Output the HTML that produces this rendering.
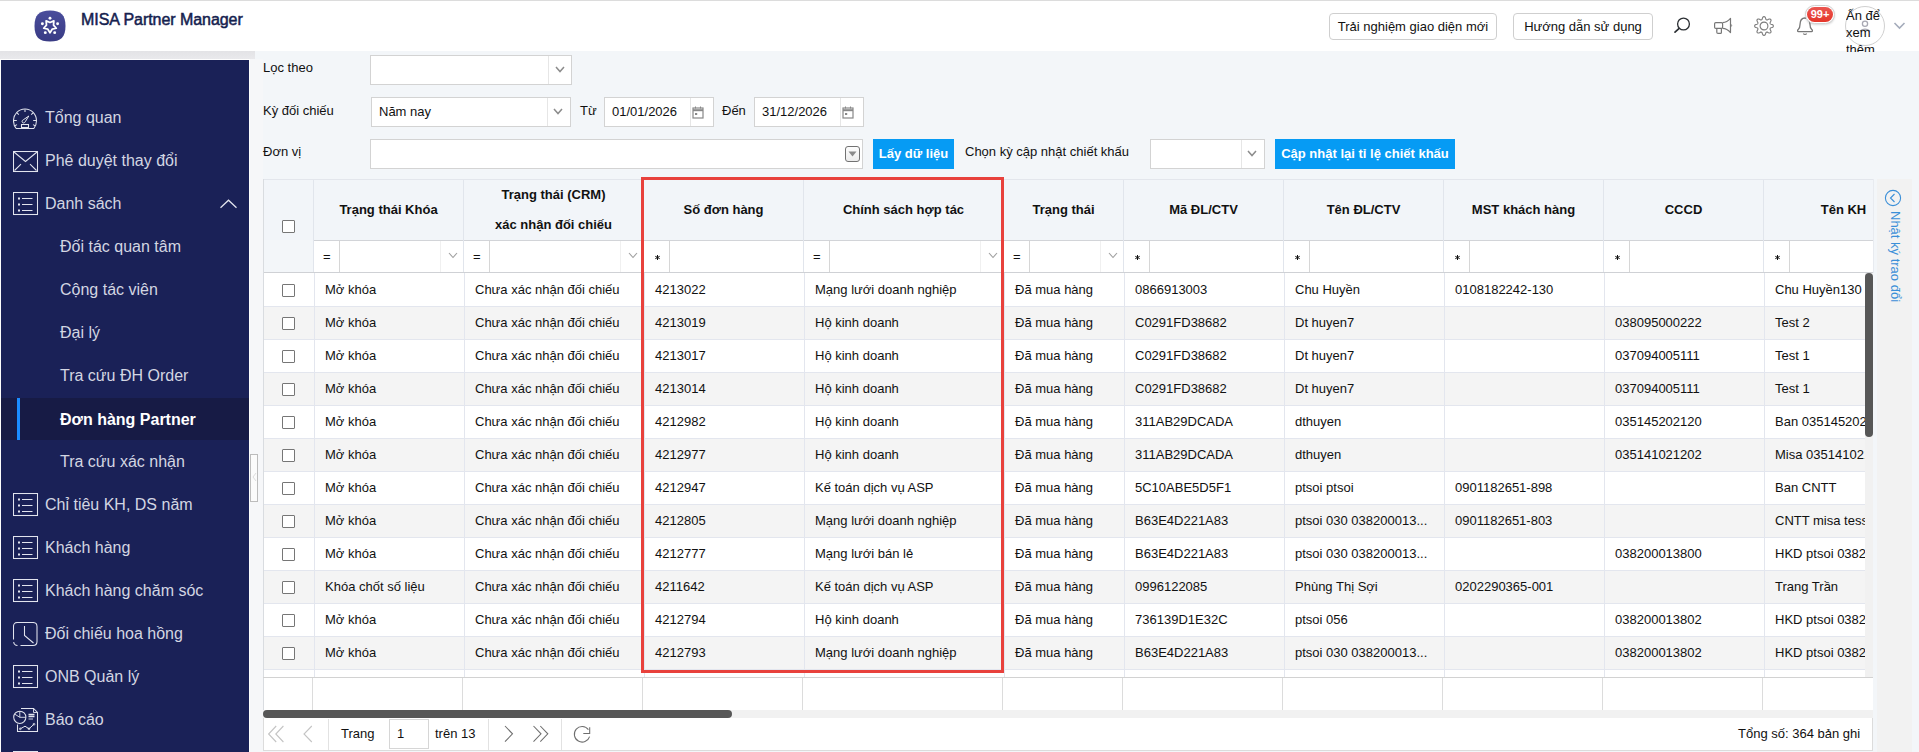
<!DOCTYPE html><html><head><meta charset="utf-8"><style>
*{box-sizing:border-box;margin:0;padding:0}
html,body{width:1919px;height:752px;overflow:hidden}
body{position:relative;background:#f3f6f9;font-family:"Liberation Sans",sans-serif;font-size:13px;color:#111}
.a{position:absolute}
#topline{left:0;top:0;width:1919px;height:1px;background:#dcdcdc}
#header{left:0;top:1px;width:1919px;height:50px;background:#fff}
#title{left:81px;top:10px;font-size:16px;font-weight:400;color:#15214f;letter-spacing:-0.05px;-webkit-text-stroke:0.5px #15214f;white-space:nowrap;line-height:18px}
.hbtn{top:12px;height:27px;border:1px solid #cfcfcf;border-radius:4px;background:#fff;font-size:13px;line-height:25px;text-align:center;color:#111;white-space:nowrap}
#sbgray{left:0;top:51px;width:255px;height:8px;background:linear-gradient(#e3e3e6,#e9e9ec)}
#sidebar{left:1px;top:60px;width:248px;height:692px;background:#1a2157;overflow:hidden}
.si{position:absolute;left:0;width:248px;height:43px;color:#d3d6e2;font-size:16px;line-height:43px;white-space:nowrap}
.si svg{position:absolute;left:12px}
.si .tx{position:absolute;left:44px;top:1px}
.si.sub .tx{left:59px}
.si.active{background:#171b45;color:#fff;font-weight:700}
.si.active:before{content:"";position:absolute;left:16px;top:0;width:3px;height:42px;background:#1a8cff}
#handle{left:250px;top:454px;width:8px;height:48px;border:1px solid #bcbcbc;background:#fbfbfb}
.lbl{white-space:nowrap;line-height:15px;color:#111}
.inp{background:#fff;border:1px solid #d3d3d3;height:30px}
.inp .dv{position:absolute;top:0;bottom:0;width:1px;background:#e6e6e6}
.chev{position:absolute}
.btnb{background:#069bf4;color:#fff;font-weight:700;text-align:center;line-height:30px;height:30px;white-space:nowrap}
/* table */
#tbl{left:263px;top:179px;width:1610px;height:498px;overflow:hidden;background:#fff;border:1px solid #dde1e8;border-right:none}
.hd{position:absolute;top:0;height:60px;background:#f2f5f9;border-right:1px solid #e1e5ec;font-weight:700;text-align:center;white-space:nowrap}
.fr{position:absolute;top:60px;height:33px;background:#fff;border-right:1px solid #e1e5ec;border-top:1px solid #d4d6da;border-bottom:1px solid #d4d6da}
.op{position:absolute;left:0;top:0;width:26px;height:31px;border-right:1px solid #e3e3e3;line-height:31px;padding-left:10px}
.row{position:absolute;left:0;height:33px;width:1700px}
.row.odd{background:#fff}
.row.even{background:#f4f4f4}
.cell{position:absolute;top:0;height:33px;border-right:1px solid #e1e5ec;border-bottom:1px solid #e3e6ee;line-height:32px;padding-left:10px;white-space:nowrap;overflow:hidden}
.cb{position:absolute;width:13px;height:13px;border:1px solid #767676;background:#fff;border-radius:1px}
</style></head><body><div id="topline" class="a"></div><div id="header" class="a"><svg class="a" style="left:34px;top:9px" width="32" height="32" viewBox="0 0 32 32">
<defs><linearGradient id="lg" x1="0" y1="0" x2="0" y2="1"><stop offset="0" stop-color="#4a4d9c"/><stop offset="1" stop-color="#393b84"/></linearGradient></defs>
<path d="M16 0.5 C27 0.5 31.5 5 31.5 16 C31.5 27 27 31.5 16 31.5 C5 31.5 0.5 27 0.5 16 C0.5 5 5 0.5 16 0.5 Z" fill="url(#lg)"/>
<g fill="#fff"><circle cx="16.00" cy="8.20" r="1.45"/><circle cx="8.39" cy="13.73" r="1.45"/><circle cx="23.61" cy="13.73" r="1.45"/><circle cx="11.30" cy="22.67" r="1.45"/><circle cx="20.70" cy="22.67" r="1.45"/></g>
<path d="M16.00 22.80 L13.83 19.19 L9.72 18.24 L12.48 15.06 L12.12 10.86 L16.00 12.50 L19.88 10.86 L19.52 15.06 L22.28 18.24 L18.17 19.19 Z" fill="none" stroke="#fff" stroke-width="1.75" stroke-linejoin="round"/>
</svg><div id="title" class="a">MISA Partner Manager</div><div class="a hbtn" style="left:1329px;width:168px">Trải nghiệm giao diện mới</div><div class="a hbtn" style="left:1513px;width:140px">Hướng dẫn sử dụng</div><svg class="a" style="left:1672px;top:15px" width="20" height="20" viewBox="0 0 20 20"><circle cx="11.5" cy="8" r="5.9" fill="none" stroke="#2b2f33" stroke-width="1.3"/><path d="M6.9 12.6 L3 16.1" stroke="#2b2f33" stroke-width="1.7" stroke-linecap="round"/></svg><svg class="a" style="left:1712px;top:15px" width="22" height="20" viewBox="0 0 22 20"><rect x="2.6" y="6.6" width="8" height="5.8" rx="1.2" fill="none" stroke="#777" stroke-width="1.2"/><path d="M10.6 6.6 Q15 6.4 18.5 2.4 V16.6 Q15 12.6 10.6 12.4" fill="none" stroke="#777" stroke-width="1.2" stroke-linejoin="round"/><path d="M4.8 12.4 V16.2 Q4.8 17.4 6 17.4 H8.4 Q9.4 17.4 9.4 16.4 V12.4" fill="none" stroke="#777" stroke-width="1.2"/><path d="M19.1 8.4 Q20.2 9.5 19.1 10.6" fill="none" stroke="#777" stroke-width="1"/></svg><svg class="a" style="left:1753.5px;top:15.4px" width="20" height="20" viewBox="0 0 20 20"><path d="M19.35 10.00 L19.22 10.60 L18.81 11.16 L17.85 11.56 L16.87 11.84 L16.40 12.17 L16.14 12.54 L16.06 12.99 L16.16 13.55 L16.65 14.44 L17.05 15.41 L16.95 16.09 L16.61 16.61 L16.09 16.95 L15.41 17.05 L14.44 16.65 L13.55 16.16 L12.99 16.06 L12.54 16.14 L12.17 16.40 L11.84 16.87 L11.56 17.85 L11.16 18.81 L10.60 19.22 L10.00 19.35 L9.40 19.22 L8.84 18.81 L8.44 17.85 L8.16 16.87 L7.83 16.40 L7.46 16.14 L7.01 16.06 L6.45 16.16 L5.56 16.65 L4.59 17.05 L3.91 16.95 L3.39 16.61 L3.05 16.09 L2.95 15.41 L3.35 14.44 L3.84 13.55 L3.94 12.99 L3.86 12.54 L3.60 12.17 L3.13 11.84 L2.15 11.56 L1.19 11.16 L0.78 10.60 L0.65 10.00 L0.78 9.40 L1.19 8.84 L2.15 8.44 L3.13 8.16 L3.60 7.83 L3.86 7.46 L3.94 7.01 L3.84 6.45 L3.35 5.56 L2.95 4.59 L3.05 3.91 L3.39 3.39 L3.91 3.05 L4.59 2.95 L5.56 3.35 L6.45 3.84 L7.01 3.94 L7.46 3.86 L7.83 3.60 L8.16 3.13 L8.44 2.15 L8.84 1.19 L9.40 0.78 L10.00 0.65 L10.60 0.78 L11.16 1.19 L11.56 2.15 L11.84 3.13 L12.17 3.60 L12.54 3.86 L12.99 3.94 L13.55 3.84 L14.44 3.35 L15.41 2.95 L16.09 3.05 L16.61 3.39 L16.95 3.91 L17.05 4.59 L16.65 5.56 L16.16 6.45 L16.06 7.01 L16.14 7.46 L16.40 7.83 L16.87 8.16 L17.85 8.44 L18.81 8.84 L19.22 9.40 L19.35 10.00 Z" fill="none" stroke="#7a7a7a" stroke-width="1.1" stroke-linejoin="round"/><circle cx="10" cy="10" r="3.9" fill="none" stroke="#7a7a7a" stroke-width="1.1"/></svg><svg class="a" style="left:1796px;top:15px" width="18" height="20" viewBox="0 0 18 20"><path d="M1.6 14.9 Q1.4 14 2.4 13.2 Q4 11.8 4 8.5 Q4.2 2 9 2 Q13.8 2 14 8.5 Q14 11.8 15.6 13.2 Q16.6 14 16.4 14.9 Q16.3 15.6 15.5 15.6 H2.5 Q1.7 15.6 1.6 14.9 Z" fill="none" stroke="#777" stroke-width="1.3" stroke-linejoin="round"/><path d="M7.2 17.6 Q9 19 10.8 17.6" fill="none" stroke="#777" stroke-width="1.2"/></svg><div class="a" style="left:1805px;top:3.5px;width:30px;height:19px;border-radius:10px;background:#fff;border:1px solid #d2d2d2;padding:1px;box-shadow:0 1px 2px rgba(0,0,0,.15)"><div style="width:26px;height:15px;border-radius:8px;background:linear-gradient(#ea5650,#e5362a);color:#fff;font-size:11px;font-weight:700;line-height:15px;text-align:center">99+</div></div><div class="a" style="left:1845px;top:5px;width:40px;height:40px;border-radius:50%;border:1px solid #d0d0d0;background:#fff"></div><svg class="a" style="left:1855px;top:14px" width="20" height="20" viewBox="0 0 20 20"><circle cx="10" cy="8.7" r="2.6" fill="none" stroke="#a9a9b3" stroke-width="1.3"/><path d="M4.8 16.2 Q10 12.2 15.2 16.2" fill="none" stroke="#a9a9b3" stroke-width="1.3"/></svg><div class="a" style="left:1846px;top:6px;width:60px;height:45px;overflow:hidden;font-size:13px;line-height:17px;color:#111">Ấn để<br>xem<br>thêm</div><svg class="a" style="left:1893px;top:20px" width="13" height="9" viewBox="0 0 13 9"><path d="M1.5 2 L6.5 7 L11.5 2" fill="none" stroke="#a5acbb" stroke-width="1.6"/></svg></div><div id="sbgray" class="a"></div><div class="a" style="left:0;top:59px;width:250px;height:693px;background:#fdfdfd"></div><div class="a" style="left:250px;top:59px;width:13px;height:693px;background:#f6f7f9"></div><div id="sidebar" class="a"><div class="si" style="top:35px"><svg style="top:13px" width="26" height="23" viewBox="0 0 26 23"><path d="M3.2 20.5 C1.4 18.4 0.5 15.8 0.5 12.8 C0.5 6.2 5.6 1 12 1 C18.4 1 23.5 6.2 23.5 12.8 C23.5 15.8 22.6 18.4 20.8 20.5 Z" fill="none" stroke="#e2e4ee" stroke-width="1.05"/>
<path d="M12 1.5 V4 M1 12.5 H3.8 M20.2 12.5 H23 M4 4.8 L5.8 6.6 M20 4.8 L18.2 6.6 M1.8 17.8 L4 16.6 M22.2 17.8 L20 16.6" stroke="#e2e4ee" stroke-width="1.05"/>
<path d="M9.6 14.6 C8.7 13.7 9 12.3 10.2 11.9 L15.8 8 L12.2 13.8 C11.7 14.9 10.4 15.3 9.6 14.6 Z" fill="none" stroke="#e2e4ee" stroke-width="1"/>
<rect x="8.5" y="16.5" width="7" height="3" fill="none" stroke="#e2e4ee" stroke-width="1.05"/></svg><span class="tx">Tổng quan</span></div><div class="si" style="top:78px"><svg style="top:13px" width="26" height="22" viewBox="0 0 26 22"><rect x="0.5" y="0.5" width="24" height="20" fill="none" stroke="#e2e4ee" stroke-width="1.05"/><path d="M1 1 L12.5 10.5 L24 1 M1.5 19.5 L8 13.2 M23.5 19.5 L17 13.2" fill="none" stroke="#e2e4ee" stroke-width="1.05"/></svg><span class="tx">Phê duyệt thay đổi</span></div><div class="si" style="top:121px"><svg style="top:11px" width="26" height="26" viewBox="0 0 26 26"><rect x="0.5" y="0.5" width="24" height="22" fill="none" stroke="#e2e4ee" stroke-width="1.05"/><g fill="#e2e4ee"><rect x="5" y="5.5" width="2" height="2"/><rect x="5" y="11.5" width="2" height="2"/><rect x="5" y="17.5" width="2" height="2"/></g><path d="M9 6.5 H19.5 M9 12.5 H19.5 M9 18.5 H19.5" stroke="#e2e4ee" stroke-width="1.05"/></svg><span class="tx">Danh sách</span></div><div class="si sub" style="top:164px"><span class="tx">Đối tác quan tâm</span></div><div class="si sub" style="top:207px"><span class="tx">Cộng tác viên</span></div><div class="si sub" style="top:250px"><span class="tx">Đại lý</span></div><div class="si sub" style="top:293px"><span class="tx">Tra cứu ĐH Order</span></div><div class="si sub active" style="top:338px;height:42px;line-height:42px"><span class="tx">Đơn hàng Partner</span></div><div class="si sub" style="top:379px"><span class="tx">Tra cứu xác nhận</span></div><div class="si" style="top:422px"><svg style="top:11px" width="26" height="26" viewBox="0 0 26 26"><rect x="0.5" y="0.5" width="24" height="22" fill="none" stroke="#e2e4ee" stroke-width="1.05"/><g fill="#e2e4ee"><rect x="5" y="5.5" width="2" height="2"/><rect x="5" y="11.5" width="2" height="2"/><rect x="5" y="17.5" width="2" height="2"/></g><path d="M9 6.5 H19.5 M9 12.5 H19.5 M9 18.5 H19.5" stroke="#e2e4ee" stroke-width="1.05"/></svg><span class="tx">Chỉ tiêu KH, DS năm</span></div><div class="si" style="top:465px"><svg style="top:11px" width="26" height="26" viewBox="0 0 26 26"><rect x="0.5" y="0.5" width="24" height="22" fill="none" stroke="#e2e4ee" stroke-width="1.05"/><g fill="#e2e4ee"><rect x="5" y="5.5" width="2" height="2"/><rect x="5" y="11.5" width="2" height="2"/><rect x="5" y="17.5" width="2" height="2"/></g><path d="M9 6.5 H19.5 M9 12.5 H19.5 M9 18.5 H19.5" stroke="#e2e4ee" stroke-width="1.05"/></svg><span class="tx">Khách hàng</span></div><div class="si" style="top:508px"><svg style="top:11px" width="26" height="26" viewBox="0 0 26 26"><rect x="0.5" y="0.5" width="24" height="22" fill="none" stroke="#e2e4ee" stroke-width="1.05"/><g fill="#e2e4ee"><rect x="5" y="5.5" width="2" height="2"/><rect x="5" y="11.5" width="2" height="2"/><rect x="5" y="17.5" width="2" height="2"/></g><path d="M9 6.5 H19.5 M9 12.5 H19.5 M9 18.5 H19.5" stroke="#e2e4ee" stroke-width="1.05"/></svg><span class="tx">Khách hàng chăm sóc</span></div><div class="si" style="top:551px"><svg style="top:11px" width="26" height="26" viewBox="0 0 26 26"><path d="M0.5 17.5 V4.5 Q0.5 0.5 4.5 0.5 H20 Q24 0.5 24 4.5 V19.5 Q24 23.5 20 23.5 H7.5 M4.5 23.5 Q1 23.3 0.7 20" fill="none" stroke="#e2e4ee" stroke-width="1.05"/><path d="M11.5 4 V13.5 L20.5 21" fill="none" stroke="#e2e4ee" stroke-width="1.05"/></svg><span class="tx">Đối chiếu hoa hồng</span></div><div class="si" style="top:594px"><svg style="top:11px" width="26" height="26" viewBox="0 0 26 26"><rect x="0.5" y="0.5" width="24" height="22" fill="none" stroke="#e2e4ee" stroke-width="1.05"/><g fill="#e2e4ee"><rect x="5" y="5.5" width="2" height="2"/><rect x="5" y="11.5" width="2" height="2"/><rect x="5" y="17.5" width="2" height="2"/></g><path d="M9 6.5 H19.5 M9 12.5 H19.5 M9 18.5 H19.5" stroke="#e2e4ee" stroke-width="1.05"/></svg><span class="tx">ONB Quản lý</span></div><div class="si" style="top:637px"><svg style="top:11px" width="26" height="26" viewBox="0 0 26 26"><path d="M8 0.5 H20.5 L24.5 4.5 V23.5 H4.5 V16.5" fill="none" stroke="#e2e4ee" stroke-width="1.05"/><path d="M20.5 0.5 V4.5 H24.5" fill="none" stroke="#e2e4ee" stroke-width="0.9"/><circle cx="6.8" cy="9.3" r="6.1" fill="none" stroke="#e2e4ee" stroke-width="1.05"/><path d="M6.8 3.2 V9.3 H12.9" fill="none" stroke="#e2e4ee" stroke-width="0.9"/><path d="M1.5 6 L6.8 9.3" stroke="#e2e4ee" stroke-width="0.9"/><path d="M15.5 6.5 H21.5 M15.5 8.5 H21.5" stroke="#e2e4ee" stroke-width="1.3"/><path d="M15.5 11 H20" stroke="#e2e4ee" stroke-width="0.9"/><path d="M7.3 20.8 L12 18.2 L16 20.8 L21 16.2" fill="none" stroke="#e2e4ee" stroke-width="1"/><g fill="none" stroke="#e2e4ee" stroke-width="0.8"><circle cx="7.3" cy="20.8" r="0.9"/><circle cx="16" cy="20.8" r="0.9"/><circle cx="21" cy="16.2" r="0.9"/></g></svg><span class="tx">Báo cáo</span></div><div class="si" style="top:680px"><svg style="top:11px" width="26" height="26" viewBox="0 0 26 26"><rect x="0.5" y="0.5" width="24" height="22" fill="none" stroke="#e2e4ee" stroke-width="1.05"/><g fill="#e2e4ee"><rect x="5" y="5.5" width="2" height="2"/><rect x="5" y="11.5" width="2" height="2"/><rect x="5" y="17.5" width="2" height="2"/></g><path d="M9 6.5 H19.5 M9 12.5 H19.5 M9 18.5 H19.5" stroke="#e2e4ee" stroke-width="1.05"/></svg><span class="tx"></span></div><svg class="a" style="left:218px;top:139px" width="20" height="11" viewBox="0 0 20 11"><path d="M1.5 8.8 L9.5 1.2 L17.5 8.8" fill="none" stroke="#e2e4ee" stroke-width="1.25"/></svg></div><div id="handle" class="a"></div><svg class="a" style="left:252px;top:472px" width="5" height="10" viewBox="0 0 5 10"><path d="M4 1 L1 5 L4 9" fill="none" stroke="#dcdcdc" stroke-width="1"/></svg><div class="a lbl" style="left:263px;top:60px">Lọc theo</div><div class="a lbl" style="left:263px;top:103px">Kỳ đối chiếu</div><div class="a lbl" style="left:263px;top:144px">Đơn vị</div><div class="a inp" style="left:370px;top:55px;width:202px"><div class="dv" style="left:177px"></div></div><svg class="a" style="left:555px;top:66px" width="10" height="6.5" viewBox="0 0 10 6.5"><path d="M1 1 L5.0 5.5 L9 1" fill="none" stroke="#8c8c8c" stroke-width="1.5"/></svg><div class="a inp" style="left:371px;top:97px;width:200px;line-height:28px;padding-left:7px">Năm nay<div class="dv" style="left:175px"></div></div><svg class="a" style="left:553px;top:108px" width="10" height="6.5" viewBox="0 0 10 6.5"><path d="M1 1 L5.0 5.5 L9 1" fill="none" stroke="#8c8c8c" stroke-width="1.5"/></svg><div class="a lbl" style="left:580px;top:103px">Từ</div><div class="a inp" style="left:604px;top:97px;width:110px;line-height:28px;padding-left:7px">01/01/2026<div class="dv" style="left:85px"></div></div><svg class="a" style="left:692px;top:106px" width="12" height="13" viewBox="0 0 12 13"><rect x="1" y="2" width="10" height="10" fill="none" stroke="#888" stroke-width="1.2"/><path d="M1 4.2 H11" stroke="#888" stroke-width="2"/><path d="M3.5 0.5 V2.5 M8.5 0.5 V2.5" stroke="#888" stroke-width="1"/><rect x="3" y="7" width="2.2" height="2" fill="#888"/></svg><div class="a lbl" style="left:722px;top:103px">Đến</div><div class="a inp" style="left:754px;top:97px;width:110px;line-height:28px;padding-left:7px">31/12/2026<div class="dv" style="left:85px"></div></div><svg class="a" style="left:842px;top:106px" width="12" height="13" viewBox="0 0 12 13"><rect x="1" y="2" width="10" height="10" fill="none" stroke="#888" stroke-width="1.2"/><path d="M1 4.2 H11" stroke="#888" stroke-width="2"/><path d="M3.5 0.5 V2.5 M8.5 0.5 V2.5" stroke="#888" stroke-width="1"/><rect x="3" y="7" width="2.2" height="2" fill="#888"/></svg><div class="a inp" style="left:370px;top:139px;width:493px"></div><div class="a" style="left:845px;top:146px;width:15px;height:16px;border:1px solid #727272;border-radius:3px;background:linear-gradient(#fdfdfd,#ececec)"></div><svg class="a" style="left:848px;top:151px" width="9" height="6" viewBox="0 0 9 6"><path d="M0.5 0.5 H8.5 L4.5 5.5 Z" fill="#8a8a8a"/></svg><div class="a btnb" style="left:873px;top:139px;width:81px">Lấy dữ liệu</div><div class="a lbl" style="left:965px;top:144px">Chọn kỳ cập nhật chiết khấu</div><div class="a inp" style="left:1150px;top:139px;width:115px"><div class="dv" style="left:90px"></div></div><svg class="a" style="left:1247px;top:150px" width="10" height="6.5" viewBox="0 0 10 6.5"><path d="M1 1 L5.0 5.5 L9 1" fill="none" stroke="#8c8c8c" stroke-width="1.5"/></svg><div class="a btnb" style="left:1275px;top:139px;width:180px">Cập nhật lại tỉ lệ chiết khấu</div><div class="a" style="left:263px;top:179px;width:1610px;height:1px;background:#e3e6ec"></div><div class="a" style="left:263px;top:180px;width:1610px;height:60px;background:#f2f5f9"></div><div class="a" style="left:313px;top:240px;width:1560px;height:1px;background:#d2d4d8"></div><div class="a" style="left:313px;top:241px;width:1560px;height:31px;background:#fff"></div><div class="a" style="left:263px;top:272px;width:1610px;height:1px;background:#cfd1d5"></div><div class="a" style="left:263px;top:179px;width:1px;height:572px;background:#d9dce0"></div><div class="a" style="left:1873px;top:179px;width:1px;height:94px;background:#e8ebf0"></div><div class="a" style="left:264px;top:180px;width:1609px;height:93px;overflow:hidden"><div class="a" style="left:49px;top:0;width:1px;height:92px;background:#e1e5ec"></div><div class="a" style="left:199px;top:0;width:1px;height:92px;background:#e1e5ec"></div><div class="a" style="left:379px;top:0;width:1px;height:92px;background:#e1e5ec"></div><div class="a" style="left:539px;top:0;width:1px;height:92px;background:#e1e5ec"></div><div class="a" style="left:739px;top:0;width:1px;height:92px;background:#e1e5ec"></div><div class="a" style="left:859px;top:0;width:1px;height:92px;background:#e1e5ec"></div><div class="a" style="left:1019px;top:0;width:1px;height:92px;background:#e1e5ec"></div><div class="a" style="left:1179px;top:0;width:1px;height:92px;background:#e1e5ec"></div><div class="a" style="left:1339px;top:0;width:1px;height:92px;background:#e1e5ec"></div><div class="a" style="left:1499px;top:0;width:1px;height:92px;background:#e1e5ec"></div><div class="a" style="left:50px;top:0;width:149px;height:60px;line-height:60px;text-align:center;font-weight:700;white-space:nowrap">Trạng thái Khóa</div><div class="a" style="left:75px;top:61px;width:1px;height:31px;background:#d6d6d6"></div><div class="a" style="left:59px;top:61px;line-height:31px">=</div><div class="a" style="left:176px;top:61px;width:1px;height:31px;background:#f0f0f0"></div><div class="a" style="left:200px;top:0;width:179px;height:60px;line-height:30px;text-align:center;font-weight:700;white-space:nowrap">Trạng thái (CRM)<br>xác nhận đối chiếu</div><div class="a" style="left:225px;top:61px;width:1px;height:31px;background:#d6d6d6"></div><div class="a" style="left:209px;top:61px;line-height:31px">=</div><div class="a" style="left:356px;top:61px;width:1px;height:31px;background:#f0f0f0"></div><div class="a" style="left:380px;top:0;width:159px;height:60px;line-height:60px;text-align:center;font-weight:700;white-space:nowrap">Số đơn hàng</div><div class="a" style="left:405px;top:61px;width:1px;height:31px;background:#d6d6d6"></div><svg class="a" style="left:390px;top:74px" width="7" height="7" viewBox="0 0 7 7"><path d="M3.5 1 V6 M1.3 2.3 L5.7 4.7 M1.3 4.7 L5.7 2.3" stroke="#111" stroke-width="1"/></svg><div class="a" style="left:540px;top:0;width:199px;height:60px;line-height:60px;text-align:center;font-weight:700;white-space:nowrap">Chính sách hợp tác</div><div class="a" style="left:565px;top:61px;width:1px;height:31px;background:#d6d6d6"></div><div class="a" style="left:549px;top:61px;line-height:31px">=</div><div class="a" style="left:716px;top:61px;width:1px;height:31px;background:#f0f0f0"></div><div class="a" style="left:740px;top:0;width:119px;height:60px;line-height:60px;text-align:center;font-weight:700;white-space:nowrap">Trạng thái</div><div class="a" style="left:765px;top:61px;width:1px;height:31px;background:#d6d6d6"></div><div class="a" style="left:749px;top:61px;line-height:31px">=</div><div class="a" style="left:836px;top:61px;width:1px;height:31px;background:#f0f0f0"></div><div class="a" style="left:860px;top:0;width:159px;height:60px;line-height:60px;text-align:center;font-weight:700;white-space:nowrap">Mã ĐL/CTV</div><div class="a" style="left:885px;top:61px;width:1px;height:31px;background:#d6d6d6"></div><svg class="a" style="left:870px;top:74px" width="7" height="7" viewBox="0 0 7 7"><path d="M3.5 1 V6 M1.3 2.3 L5.7 4.7 M1.3 4.7 L5.7 2.3" stroke="#111" stroke-width="1"/></svg><div class="a" style="left:1020px;top:0;width:159px;height:60px;line-height:60px;text-align:center;font-weight:700;white-space:nowrap">Tên ĐL/CTV</div><div class="a" style="left:1045px;top:61px;width:1px;height:31px;background:#d6d6d6"></div><svg class="a" style="left:1030px;top:74px" width="7" height="7" viewBox="0 0 7 7"><path d="M3.5 1 V6 M1.3 2.3 L5.7 4.7 M1.3 4.7 L5.7 2.3" stroke="#111" stroke-width="1"/></svg><div class="a" style="left:1180px;top:0;width:159px;height:60px;line-height:60px;text-align:center;font-weight:700;white-space:nowrap">MST khách hàng</div><div class="a" style="left:1205px;top:61px;width:1px;height:31px;background:#d6d6d6"></div><svg class="a" style="left:1190px;top:74px" width="7" height="7" viewBox="0 0 7 7"><path d="M3.5 1 V6 M1.3 2.3 L5.7 4.7 M1.3 4.7 L5.7 2.3" stroke="#111" stroke-width="1"/></svg><div class="a" style="left:1340px;top:0;width:159px;height:60px;line-height:60px;text-align:center;font-weight:700;white-space:nowrap">CCCD</div><div class="a" style="left:1365px;top:61px;width:1px;height:31px;background:#d6d6d6"></div><svg class="a" style="left:1350px;top:74px" width="7" height="7" viewBox="0 0 7 7"><path d="M3.5 1 V6 M1.3 2.3 L5.7 4.7 M1.3 4.7 L5.7 2.3" stroke="#111" stroke-width="1"/></svg><div class="a" style="left:1500px;top:0;width:159px;height:60px;line-height:60px;text-align:center;font-weight:700;white-space:nowrap">Tên KH</div><div class="a" style="left:1525px;top:61px;width:1px;height:31px;background:#d6d6d6"></div><svg class="a" style="left:1510px;top:74px" width="7" height="7" viewBox="0 0 7 7"><path d="M3.5 1 V6 M1.3 2.3 L5.7 4.7 M1.3 4.7 L5.7 2.3" stroke="#111" stroke-width="1"/></svg></div><svg class="a" style="left:448px;top:252px" width="10" height="6.5" viewBox="0 0 10 6.5"><path d="M1 1 L5.0 5.5 L9 1" fill="none" stroke="#a0a0a0" stroke-width="1.1"/></svg><svg class="a" style="left:628px;top:252px" width="10" height="6.5" viewBox="0 0 10 6.5"><path d="M1 1 L5.0 5.5 L9 1" fill="none" stroke="#a0a0a0" stroke-width="1.1"/></svg><svg class="a" style="left:988px;top:252px" width="10" height="6.5" viewBox="0 0 10 6.5"><path d="M1 1 L5.0 5.5 L9 1" fill="none" stroke="#a0a0a0" stroke-width="1.1"/></svg><svg class="a" style="left:1108px;top:252px" width="10" height="6.5" viewBox="0 0 10 6.5"><path d="M1 1 L5.0 5.5 L9 1" fill="none" stroke="#a0a0a0" stroke-width="1.1"/></svg><div class="a cb" style="left:282px;top:220px"></div><div class="a" style="left:264px;top:273px;width:1602px;height:404px;overflow:hidden;background:#fff"><div class="a" style="left:0;top:0px;width:1700px;height:34px;background:#fff;border-bottom:1px solid #e3e6ee"><div class="cb" style="left:18px;top:11px"></div><div class="a" style="left:50px;top:0;width:1px;height:34px;background:#e3e6ee"></div><div class="a" style="left:51px;top:0;width:149px;height:33px;line-height:33px;padding-left:10px;white-space:nowrap;overflow:hidden">Mở khóa</div><div class="a" style="left:200px;top:0;width:1px;height:34px;background:#e3e6ee"></div><div class="a" style="left:201px;top:0;width:179px;height:33px;line-height:33px;padding-left:10px;white-space:nowrap;overflow:hidden">Chưa xác nhận đối chiếu</div><div class="a" style="left:380px;top:0;width:1px;height:34px;background:#e3e6ee"></div><div class="a" style="left:381px;top:0;width:159px;height:33px;line-height:33px;padding-left:10px;white-space:nowrap;overflow:hidden">4213022</div><div class="a" style="left:540px;top:0;width:1px;height:34px;background:#e3e6ee"></div><div class="a" style="left:541px;top:0;width:199px;height:33px;line-height:33px;padding-left:10px;white-space:nowrap;overflow:hidden">Mạng lưới doanh nghiệp</div><div class="a" style="left:740px;top:0;width:1px;height:34px;background:#e3e6ee"></div><div class="a" style="left:741px;top:0;width:119px;height:33px;line-height:33px;padding-left:10px;white-space:nowrap;overflow:hidden">Đã mua hàng</div><div class="a" style="left:860px;top:0;width:1px;height:34px;background:#e3e6ee"></div><div class="a" style="left:861px;top:0;width:159px;height:33px;line-height:33px;padding-left:10px;white-space:nowrap;overflow:hidden">0866913003</div><div class="a" style="left:1020px;top:0;width:1px;height:34px;background:#e3e6ee"></div><div class="a" style="left:1021px;top:0;width:159px;height:33px;line-height:33px;padding-left:10px;white-space:nowrap;overflow:hidden">Chu Huyền</div><div class="a" style="left:1180px;top:0;width:1px;height:34px;background:#e3e6ee"></div><div class="a" style="left:1181px;top:0;width:159px;height:33px;line-height:33px;padding-left:10px;white-space:nowrap;overflow:hidden">0108182242-130</div><div class="a" style="left:1340px;top:0;width:1px;height:34px;background:#e3e6ee"></div><div class="a" style="left:1500px;top:0;width:1px;height:34px;background:#e3e6ee"></div><div class="a" style="left:1501px;top:0;width:159px;height:33px;line-height:33px;padding-left:10px;white-space:nowrap;overflow:hidden">Chu Huyền130</div></div><div class="a" style="left:0;top:34px;width:1700px;height:33px;background:#f4f4f4;border-bottom:1px solid #e3e6ee"><div class="cb" style="left:18px;top:10px"></div><div class="a" style="left:50px;top:0;width:1px;height:33px;background:#e3e6ee"></div><div class="a" style="left:51px;top:0;width:149px;height:32px;line-height:32px;padding-left:10px;white-space:nowrap;overflow:hidden">Mở khóa</div><div class="a" style="left:200px;top:0;width:1px;height:33px;background:#e3e6ee"></div><div class="a" style="left:201px;top:0;width:179px;height:32px;line-height:32px;padding-left:10px;white-space:nowrap;overflow:hidden">Chưa xác nhận đối chiếu</div><div class="a" style="left:380px;top:0;width:1px;height:33px;background:#e3e6ee"></div><div class="a" style="left:381px;top:0;width:159px;height:32px;line-height:32px;padding-left:10px;white-space:nowrap;overflow:hidden">4213019</div><div class="a" style="left:540px;top:0;width:1px;height:33px;background:#e3e6ee"></div><div class="a" style="left:541px;top:0;width:199px;height:32px;line-height:32px;padding-left:10px;white-space:nowrap;overflow:hidden">Hộ kinh doanh</div><div class="a" style="left:740px;top:0;width:1px;height:33px;background:#e3e6ee"></div><div class="a" style="left:741px;top:0;width:119px;height:32px;line-height:32px;padding-left:10px;white-space:nowrap;overflow:hidden">Đã mua hàng</div><div class="a" style="left:860px;top:0;width:1px;height:33px;background:#e3e6ee"></div><div class="a" style="left:861px;top:0;width:159px;height:32px;line-height:32px;padding-left:10px;white-space:nowrap;overflow:hidden">C0291FD38682</div><div class="a" style="left:1020px;top:0;width:1px;height:33px;background:#e3e6ee"></div><div class="a" style="left:1021px;top:0;width:159px;height:32px;line-height:32px;padding-left:10px;white-space:nowrap;overflow:hidden">Dt huyen7</div><div class="a" style="left:1180px;top:0;width:1px;height:33px;background:#e3e6ee"></div><div class="a" style="left:1340px;top:0;width:1px;height:33px;background:#e3e6ee"></div><div class="a" style="left:1341px;top:0;width:159px;height:32px;line-height:32px;padding-left:10px;white-space:nowrap;overflow:hidden">038095000222</div><div class="a" style="left:1500px;top:0;width:1px;height:33px;background:#e3e6ee"></div><div class="a" style="left:1501px;top:0;width:159px;height:32px;line-height:32px;padding-left:10px;white-space:nowrap;overflow:hidden">Test 2</div></div><div class="a" style="left:0;top:67px;width:1700px;height:33px;background:#fff;border-bottom:1px solid #e3e6ee"><div class="cb" style="left:18px;top:10px"></div><div class="a" style="left:50px;top:0;width:1px;height:33px;background:#e3e6ee"></div><div class="a" style="left:51px;top:0;width:149px;height:32px;line-height:32px;padding-left:10px;white-space:nowrap;overflow:hidden">Mở khóa</div><div class="a" style="left:200px;top:0;width:1px;height:33px;background:#e3e6ee"></div><div class="a" style="left:201px;top:0;width:179px;height:32px;line-height:32px;padding-left:10px;white-space:nowrap;overflow:hidden">Chưa xác nhận đối chiếu</div><div class="a" style="left:380px;top:0;width:1px;height:33px;background:#e3e6ee"></div><div class="a" style="left:381px;top:0;width:159px;height:32px;line-height:32px;padding-left:10px;white-space:nowrap;overflow:hidden">4213017</div><div class="a" style="left:540px;top:0;width:1px;height:33px;background:#e3e6ee"></div><div class="a" style="left:541px;top:0;width:199px;height:32px;line-height:32px;padding-left:10px;white-space:nowrap;overflow:hidden">Hộ kinh doanh</div><div class="a" style="left:740px;top:0;width:1px;height:33px;background:#e3e6ee"></div><div class="a" style="left:741px;top:0;width:119px;height:32px;line-height:32px;padding-left:10px;white-space:nowrap;overflow:hidden">Đã mua hàng</div><div class="a" style="left:860px;top:0;width:1px;height:33px;background:#e3e6ee"></div><div class="a" style="left:861px;top:0;width:159px;height:32px;line-height:32px;padding-left:10px;white-space:nowrap;overflow:hidden">C0291FD38682</div><div class="a" style="left:1020px;top:0;width:1px;height:33px;background:#e3e6ee"></div><div class="a" style="left:1021px;top:0;width:159px;height:32px;line-height:32px;padding-left:10px;white-space:nowrap;overflow:hidden">Dt huyen7</div><div class="a" style="left:1180px;top:0;width:1px;height:33px;background:#e3e6ee"></div><div class="a" style="left:1340px;top:0;width:1px;height:33px;background:#e3e6ee"></div><div class="a" style="left:1341px;top:0;width:159px;height:32px;line-height:32px;padding-left:10px;white-space:nowrap;overflow:hidden">037094005111</div><div class="a" style="left:1500px;top:0;width:1px;height:33px;background:#e3e6ee"></div><div class="a" style="left:1501px;top:0;width:159px;height:32px;line-height:32px;padding-left:10px;white-space:nowrap;overflow:hidden">Test 1</div></div><div class="a" style="left:0;top:100px;width:1700px;height:33px;background:#f4f4f4;border-bottom:1px solid #e3e6ee"><div class="cb" style="left:18px;top:10px"></div><div class="a" style="left:50px;top:0;width:1px;height:33px;background:#e3e6ee"></div><div class="a" style="left:51px;top:0;width:149px;height:32px;line-height:32px;padding-left:10px;white-space:nowrap;overflow:hidden">Mở khóa</div><div class="a" style="left:200px;top:0;width:1px;height:33px;background:#e3e6ee"></div><div class="a" style="left:201px;top:0;width:179px;height:32px;line-height:32px;padding-left:10px;white-space:nowrap;overflow:hidden">Chưa xác nhận đối chiếu</div><div class="a" style="left:380px;top:0;width:1px;height:33px;background:#e3e6ee"></div><div class="a" style="left:381px;top:0;width:159px;height:32px;line-height:32px;padding-left:10px;white-space:nowrap;overflow:hidden">4213014</div><div class="a" style="left:540px;top:0;width:1px;height:33px;background:#e3e6ee"></div><div class="a" style="left:541px;top:0;width:199px;height:32px;line-height:32px;padding-left:10px;white-space:nowrap;overflow:hidden">Hộ kinh doanh</div><div class="a" style="left:740px;top:0;width:1px;height:33px;background:#e3e6ee"></div><div class="a" style="left:741px;top:0;width:119px;height:32px;line-height:32px;padding-left:10px;white-space:nowrap;overflow:hidden">Đã mua hàng</div><div class="a" style="left:860px;top:0;width:1px;height:33px;background:#e3e6ee"></div><div class="a" style="left:861px;top:0;width:159px;height:32px;line-height:32px;padding-left:10px;white-space:nowrap;overflow:hidden">C0291FD38682</div><div class="a" style="left:1020px;top:0;width:1px;height:33px;background:#e3e6ee"></div><div class="a" style="left:1021px;top:0;width:159px;height:32px;line-height:32px;padding-left:10px;white-space:nowrap;overflow:hidden">Dt huyen7</div><div class="a" style="left:1180px;top:0;width:1px;height:33px;background:#e3e6ee"></div><div class="a" style="left:1340px;top:0;width:1px;height:33px;background:#e3e6ee"></div><div class="a" style="left:1341px;top:0;width:159px;height:32px;line-height:32px;padding-left:10px;white-space:nowrap;overflow:hidden">037094005111</div><div class="a" style="left:1500px;top:0;width:1px;height:33px;background:#e3e6ee"></div><div class="a" style="left:1501px;top:0;width:159px;height:32px;line-height:32px;padding-left:10px;white-space:nowrap;overflow:hidden">Test 1</div></div><div class="a" style="left:0;top:133px;width:1700px;height:33px;background:#fff;border-bottom:1px solid #e3e6ee"><div class="cb" style="left:18px;top:10px"></div><div class="a" style="left:50px;top:0;width:1px;height:33px;background:#e3e6ee"></div><div class="a" style="left:51px;top:0;width:149px;height:32px;line-height:32px;padding-left:10px;white-space:nowrap;overflow:hidden">Mở khóa</div><div class="a" style="left:200px;top:0;width:1px;height:33px;background:#e3e6ee"></div><div class="a" style="left:201px;top:0;width:179px;height:32px;line-height:32px;padding-left:10px;white-space:nowrap;overflow:hidden">Chưa xác nhận đối chiếu</div><div class="a" style="left:380px;top:0;width:1px;height:33px;background:#e3e6ee"></div><div class="a" style="left:381px;top:0;width:159px;height:32px;line-height:32px;padding-left:10px;white-space:nowrap;overflow:hidden">4212982</div><div class="a" style="left:540px;top:0;width:1px;height:33px;background:#e3e6ee"></div><div class="a" style="left:541px;top:0;width:199px;height:32px;line-height:32px;padding-left:10px;white-space:nowrap;overflow:hidden">Hộ kinh doanh</div><div class="a" style="left:740px;top:0;width:1px;height:33px;background:#e3e6ee"></div><div class="a" style="left:741px;top:0;width:119px;height:32px;line-height:32px;padding-left:10px;white-space:nowrap;overflow:hidden">Đã mua hàng</div><div class="a" style="left:860px;top:0;width:1px;height:33px;background:#e3e6ee"></div><div class="a" style="left:861px;top:0;width:159px;height:32px;line-height:32px;padding-left:10px;white-space:nowrap;overflow:hidden">311AB29DCADA</div><div class="a" style="left:1020px;top:0;width:1px;height:33px;background:#e3e6ee"></div><div class="a" style="left:1021px;top:0;width:159px;height:32px;line-height:32px;padding-left:10px;white-space:nowrap;overflow:hidden">dthuyen</div><div class="a" style="left:1180px;top:0;width:1px;height:33px;background:#e3e6ee"></div><div class="a" style="left:1340px;top:0;width:1px;height:33px;background:#e3e6ee"></div><div class="a" style="left:1341px;top:0;width:159px;height:32px;line-height:32px;padding-left:10px;white-space:nowrap;overflow:hidden">035145202120</div><div class="a" style="left:1500px;top:0;width:1px;height:33px;background:#e3e6ee"></div><div class="a" style="left:1501px;top:0;width:159px;height:32px;line-height:32px;padding-left:10px;white-space:nowrap;overflow:hidden">Ban 035145202120</div></div><div class="a" style="left:0;top:166px;width:1700px;height:33px;background:#f4f4f4;border-bottom:1px solid #e3e6ee"><div class="cb" style="left:18px;top:10px"></div><div class="a" style="left:50px;top:0;width:1px;height:33px;background:#e3e6ee"></div><div class="a" style="left:51px;top:0;width:149px;height:32px;line-height:32px;padding-left:10px;white-space:nowrap;overflow:hidden">Mở khóa</div><div class="a" style="left:200px;top:0;width:1px;height:33px;background:#e3e6ee"></div><div class="a" style="left:201px;top:0;width:179px;height:32px;line-height:32px;padding-left:10px;white-space:nowrap;overflow:hidden">Chưa xác nhận đối chiếu</div><div class="a" style="left:380px;top:0;width:1px;height:33px;background:#e3e6ee"></div><div class="a" style="left:381px;top:0;width:159px;height:32px;line-height:32px;padding-left:10px;white-space:nowrap;overflow:hidden">4212977</div><div class="a" style="left:540px;top:0;width:1px;height:33px;background:#e3e6ee"></div><div class="a" style="left:541px;top:0;width:199px;height:32px;line-height:32px;padding-left:10px;white-space:nowrap;overflow:hidden">Hộ kinh doanh</div><div class="a" style="left:740px;top:0;width:1px;height:33px;background:#e3e6ee"></div><div class="a" style="left:741px;top:0;width:119px;height:32px;line-height:32px;padding-left:10px;white-space:nowrap;overflow:hidden">Đã mua hàng</div><div class="a" style="left:860px;top:0;width:1px;height:33px;background:#e3e6ee"></div><div class="a" style="left:861px;top:0;width:159px;height:32px;line-height:32px;padding-left:10px;white-space:nowrap;overflow:hidden">311AB29DCADA</div><div class="a" style="left:1020px;top:0;width:1px;height:33px;background:#e3e6ee"></div><div class="a" style="left:1021px;top:0;width:159px;height:32px;line-height:32px;padding-left:10px;white-space:nowrap;overflow:hidden">dthuyen</div><div class="a" style="left:1180px;top:0;width:1px;height:33px;background:#e3e6ee"></div><div class="a" style="left:1340px;top:0;width:1px;height:33px;background:#e3e6ee"></div><div class="a" style="left:1341px;top:0;width:159px;height:32px;line-height:32px;padding-left:10px;white-space:nowrap;overflow:hidden">035141021202</div><div class="a" style="left:1500px;top:0;width:1px;height:33px;background:#e3e6ee"></div><div class="a" style="left:1501px;top:0;width:159px;height:32px;line-height:32px;padding-left:10px;white-space:nowrap;overflow:hidden">Misa 035141021202</div></div><div class="a" style="left:0;top:199px;width:1700px;height:33px;background:#fff;border-bottom:1px solid #e3e6ee"><div class="cb" style="left:18px;top:10px"></div><div class="a" style="left:50px;top:0;width:1px;height:33px;background:#e3e6ee"></div><div class="a" style="left:51px;top:0;width:149px;height:32px;line-height:32px;padding-left:10px;white-space:nowrap;overflow:hidden">Mở khóa</div><div class="a" style="left:200px;top:0;width:1px;height:33px;background:#e3e6ee"></div><div class="a" style="left:201px;top:0;width:179px;height:32px;line-height:32px;padding-left:10px;white-space:nowrap;overflow:hidden">Chưa xác nhận đối chiếu</div><div class="a" style="left:380px;top:0;width:1px;height:33px;background:#e3e6ee"></div><div class="a" style="left:381px;top:0;width:159px;height:32px;line-height:32px;padding-left:10px;white-space:nowrap;overflow:hidden">4212947</div><div class="a" style="left:540px;top:0;width:1px;height:33px;background:#e3e6ee"></div><div class="a" style="left:541px;top:0;width:199px;height:32px;line-height:32px;padding-left:10px;white-space:nowrap;overflow:hidden">Kế toán dịch vụ ASP</div><div class="a" style="left:740px;top:0;width:1px;height:33px;background:#e3e6ee"></div><div class="a" style="left:741px;top:0;width:119px;height:32px;line-height:32px;padding-left:10px;white-space:nowrap;overflow:hidden">Đã mua hàng</div><div class="a" style="left:860px;top:0;width:1px;height:33px;background:#e3e6ee"></div><div class="a" style="left:861px;top:0;width:159px;height:32px;line-height:32px;padding-left:10px;white-space:nowrap;overflow:hidden">5C10ABE5D5F1</div><div class="a" style="left:1020px;top:0;width:1px;height:33px;background:#e3e6ee"></div><div class="a" style="left:1021px;top:0;width:159px;height:32px;line-height:32px;padding-left:10px;white-space:nowrap;overflow:hidden">ptsoi ptsoi</div><div class="a" style="left:1180px;top:0;width:1px;height:33px;background:#e3e6ee"></div><div class="a" style="left:1181px;top:0;width:159px;height:32px;line-height:32px;padding-left:10px;white-space:nowrap;overflow:hidden">0901182651-898</div><div class="a" style="left:1340px;top:0;width:1px;height:33px;background:#e3e6ee"></div><div class="a" style="left:1500px;top:0;width:1px;height:33px;background:#e3e6ee"></div><div class="a" style="left:1501px;top:0;width:159px;height:32px;line-height:32px;padding-left:10px;white-space:nowrap;overflow:hidden">Ban CNTT</div></div><div class="a" style="left:0;top:232px;width:1700px;height:33px;background:#f4f4f4;border-bottom:1px solid #e3e6ee"><div class="cb" style="left:18px;top:10px"></div><div class="a" style="left:50px;top:0;width:1px;height:33px;background:#e3e6ee"></div><div class="a" style="left:51px;top:0;width:149px;height:32px;line-height:32px;padding-left:10px;white-space:nowrap;overflow:hidden">Mở khóa</div><div class="a" style="left:200px;top:0;width:1px;height:33px;background:#e3e6ee"></div><div class="a" style="left:201px;top:0;width:179px;height:32px;line-height:32px;padding-left:10px;white-space:nowrap;overflow:hidden">Chưa xác nhận đối chiếu</div><div class="a" style="left:380px;top:0;width:1px;height:33px;background:#e3e6ee"></div><div class="a" style="left:381px;top:0;width:159px;height:32px;line-height:32px;padding-left:10px;white-space:nowrap;overflow:hidden">4212805</div><div class="a" style="left:540px;top:0;width:1px;height:33px;background:#e3e6ee"></div><div class="a" style="left:541px;top:0;width:199px;height:32px;line-height:32px;padding-left:10px;white-space:nowrap;overflow:hidden">Mạng lưới doanh nghiệp</div><div class="a" style="left:740px;top:0;width:1px;height:33px;background:#e3e6ee"></div><div class="a" style="left:741px;top:0;width:119px;height:32px;line-height:32px;padding-left:10px;white-space:nowrap;overflow:hidden">Đã mua hàng</div><div class="a" style="left:860px;top:0;width:1px;height:33px;background:#e3e6ee"></div><div class="a" style="left:861px;top:0;width:159px;height:32px;line-height:32px;padding-left:10px;white-space:nowrap;overflow:hidden">B63E4D221A83</div><div class="a" style="left:1020px;top:0;width:1px;height:33px;background:#e3e6ee"></div><div class="a" style="left:1021px;top:0;width:159px;height:32px;line-height:32px;padding-left:10px;white-space:nowrap;overflow:hidden">ptsoi 030 038200013...</div><div class="a" style="left:1180px;top:0;width:1px;height:33px;background:#e3e6ee"></div><div class="a" style="left:1181px;top:0;width:159px;height:32px;line-height:32px;padding-left:10px;white-space:nowrap;overflow:hidden">0901182651-803</div><div class="a" style="left:1340px;top:0;width:1px;height:33px;background:#e3e6ee"></div><div class="a" style="left:1500px;top:0;width:1px;height:33px;background:#e3e6ee"></div><div class="a" style="left:1501px;top:0;width:159px;height:32px;line-height:32px;padding-left:10px;white-space:nowrap;overflow:hidden">CNTT misa tesst</div></div><div class="a" style="left:0;top:265px;width:1700px;height:33px;background:#fff;border-bottom:1px solid #e3e6ee"><div class="cb" style="left:18px;top:10px"></div><div class="a" style="left:50px;top:0;width:1px;height:33px;background:#e3e6ee"></div><div class="a" style="left:51px;top:0;width:149px;height:32px;line-height:32px;padding-left:10px;white-space:nowrap;overflow:hidden">Mở khóa</div><div class="a" style="left:200px;top:0;width:1px;height:33px;background:#e3e6ee"></div><div class="a" style="left:201px;top:0;width:179px;height:32px;line-height:32px;padding-left:10px;white-space:nowrap;overflow:hidden">Chưa xác nhận đối chiếu</div><div class="a" style="left:380px;top:0;width:1px;height:33px;background:#e3e6ee"></div><div class="a" style="left:381px;top:0;width:159px;height:32px;line-height:32px;padding-left:10px;white-space:nowrap;overflow:hidden">4212777</div><div class="a" style="left:540px;top:0;width:1px;height:33px;background:#e3e6ee"></div><div class="a" style="left:541px;top:0;width:199px;height:32px;line-height:32px;padding-left:10px;white-space:nowrap;overflow:hidden">Mạng lưới bán lẻ</div><div class="a" style="left:740px;top:0;width:1px;height:33px;background:#e3e6ee"></div><div class="a" style="left:741px;top:0;width:119px;height:32px;line-height:32px;padding-left:10px;white-space:nowrap;overflow:hidden">Đã mua hàng</div><div class="a" style="left:860px;top:0;width:1px;height:33px;background:#e3e6ee"></div><div class="a" style="left:861px;top:0;width:159px;height:32px;line-height:32px;padding-left:10px;white-space:nowrap;overflow:hidden">B63E4D221A83</div><div class="a" style="left:1020px;top:0;width:1px;height:33px;background:#e3e6ee"></div><div class="a" style="left:1021px;top:0;width:159px;height:32px;line-height:32px;padding-left:10px;white-space:nowrap;overflow:hidden">ptsoi 030 038200013...</div><div class="a" style="left:1180px;top:0;width:1px;height:33px;background:#e3e6ee"></div><div class="a" style="left:1340px;top:0;width:1px;height:33px;background:#e3e6ee"></div><div class="a" style="left:1341px;top:0;width:159px;height:32px;line-height:32px;padding-left:10px;white-space:nowrap;overflow:hidden">038200013800</div><div class="a" style="left:1500px;top:0;width:1px;height:33px;background:#e3e6ee"></div><div class="a" style="left:1501px;top:0;width:159px;height:32px;line-height:32px;padding-left:10px;white-space:nowrap;overflow:hidden">HKD ptsoi 038200013800</div></div><div class="a" style="left:0;top:298px;width:1700px;height:33px;background:#f4f4f4;border-bottom:1px solid #e3e6ee"><div class="cb" style="left:18px;top:10px"></div><div class="a" style="left:50px;top:0;width:1px;height:33px;background:#e3e6ee"></div><div class="a" style="left:51px;top:0;width:149px;height:32px;line-height:32px;padding-left:10px;white-space:nowrap;overflow:hidden">Khóa chốt số liệu</div><div class="a" style="left:200px;top:0;width:1px;height:33px;background:#e3e6ee"></div><div class="a" style="left:201px;top:0;width:179px;height:32px;line-height:32px;padding-left:10px;white-space:nowrap;overflow:hidden">Chưa xác nhận đối chiếu</div><div class="a" style="left:380px;top:0;width:1px;height:33px;background:#e3e6ee"></div><div class="a" style="left:381px;top:0;width:159px;height:32px;line-height:32px;padding-left:10px;white-space:nowrap;overflow:hidden">4211642</div><div class="a" style="left:540px;top:0;width:1px;height:33px;background:#e3e6ee"></div><div class="a" style="left:541px;top:0;width:199px;height:32px;line-height:32px;padding-left:10px;white-space:nowrap;overflow:hidden">Kế toán dịch vụ ASP</div><div class="a" style="left:740px;top:0;width:1px;height:33px;background:#e3e6ee"></div><div class="a" style="left:741px;top:0;width:119px;height:32px;line-height:32px;padding-left:10px;white-space:nowrap;overflow:hidden">Đã mua hàng</div><div class="a" style="left:860px;top:0;width:1px;height:33px;background:#e3e6ee"></div><div class="a" style="left:861px;top:0;width:159px;height:32px;line-height:32px;padding-left:10px;white-space:nowrap;overflow:hidden">0996122085</div><div class="a" style="left:1020px;top:0;width:1px;height:33px;background:#e3e6ee"></div><div class="a" style="left:1021px;top:0;width:159px;height:32px;line-height:32px;padding-left:10px;white-space:nowrap;overflow:hidden">Phùng Thị Sợi</div><div class="a" style="left:1180px;top:0;width:1px;height:33px;background:#e3e6ee"></div><div class="a" style="left:1181px;top:0;width:159px;height:32px;line-height:32px;padding-left:10px;white-space:nowrap;overflow:hidden">0202290365-001</div><div class="a" style="left:1340px;top:0;width:1px;height:33px;background:#e3e6ee"></div><div class="a" style="left:1500px;top:0;width:1px;height:33px;background:#e3e6ee"></div><div class="a" style="left:1501px;top:0;width:159px;height:32px;line-height:32px;padding-left:10px;white-space:nowrap;overflow:hidden">Trang Trần</div></div><div class="a" style="left:0;top:331px;width:1700px;height:33px;background:#fff;border-bottom:1px solid #e3e6ee"><div class="cb" style="left:18px;top:10px"></div><div class="a" style="left:50px;top:0;width:1px;height:33px;background:#e3e6ee"></div><div class="a" style="left:51px;top:0;width:149px;height:32px;line-height:32px;padding-left:10px;white-space:nowrap;overflow:hidden">Mở khóa</div><div class="a" style="left:200px;top:0;width:1px;height:33px;background:#e3e6ee"></div><div class="a" style="left:201px;top:0;width:179px;height:32px;line-height:32px;padding-left:10px;white-space:nowrap;overflow:hidden">Chưa xác nhận đối chiếu</div><div class="a" style="left:380px;top:0;width:1px;height:33px;background:#e3e6ee"></div><div class="a" style="left:381px;top:0;width:159px;height:32px;line-height:32px;padding-left:10px;white-space:nowrap;overflow:hidden">4212794</div><div class="a" style="left:540px;top:0;width:1px;height:33px;background:#e3e6ee"></div><div class="a" style="left:541px;top:0;width:199px;height:32px;line-height:32px;padding-left:10px;white-space:nowrap;overflow:hidden">Hộ kinh doanh</div><div class="a" style="left:740px;top:0;width:1px;height:33px;background:#e3e6ee"></div><div class="a" style="left:741px;top:0;width:119px;height:32px;line-height:32px;padding-left:10px;white-space:nowrap;overflow:hidden">Đã mua hàng</div><div class="a" style="left:860px;top:0;width:1px;height:33px;background:#e3e6ee"></div><div class="a" style="left:861px;top:0;width:159px;height:32px;line-height:32px;padding-left:10px;white-space:nowrap;overflow:hidden">736139D1E32C</div><div class="a" style="left:1020px;top:0;width:1px;height:33px;background:#e3e6ee"></div><div class="a" style="left:1021px;top:0;width:159px;height:32px;line-height:32px;padding-left:10px;white-space:nowrap;overflow:hidden">ptsoi 056</div><div class="a" style="left:1180px;top:0;width:1px;height:33px;background:#e3e6ee"></div><div class="a" style="left:1340px;top:0;width:1px;height:33px;background:#e3e6ee"></div><div class="a" style="left:1341px;top:0;width:159px;height:32px;line-height:32px;padding-left:10px;white-space:nowrap;overflow:hidden">038200013802</div><div class="a" style="left:1500px;top:0;width:1px;height:33px;background:#e3e6ee"></div><div class="a" style="left:1501px;top:0;width:159px;height:32px;line-height:32px;padding-left:10px;white-space:nowrap;overflow:hidden">HKD ptsoi 038200013802</div></div><div class="a" style="left:0;top:364px;width:1700px;height:33px;background:#f4f4f4;border-bottom:1px solid #e3e6ee"><div class="cb" style="left:18px;top:10px"></div><div class="a" style="left:50px;top:0;width:1px;height:33px;background:#e3e6ee"></div><div class="a" style="left:51px;top:0;width:149px;height:32px;line-height:32px;padding-left:10px;white-space:nowrap;overflow:hidden">Mở khóa</div><div class="a" style="left:200px;top:0;width:1px;height:33px;background:#e3e6ee"></div><div class="a" style="left:201px;top:0;width:179px;height:32px;line-height:32px;padding-left:10px;white-space:nowrap;overflow:hidden">Chưa xác nhận đối chiếu</div><div class="a" style="left:380px;top:0;width:1px;height:33px;background:#e3e6ee"></div><div class="a" style="left:381px;top:0;width:159px;height:32px;line-height:32px;padding-left:10px;white-space:nowrap;overflow:hidden">4212793</div><div class="a" style="left:540px;top:0;width:1px;height:33px;background:#e3e6ee"></div><div class="a" style="left:541px;top:0;width:199px;height:32px;line-height:32px;padding-left:10px;white-space:nowrap;overflow:hidden">Mạng lưới doanh nghiệp</div><div class="a" style="left:740px;top:0;width:1px;height:33px;background:#e3e6ee"></div><div class="a" style="left:741px;top:0;width:119px;height:32px;line-height:32px;padding-left:10px;white-space:nowrap;overflow:hidden">Đã mua hàng</div><div class="a" style="left:860px;top:0;width:1px;height:33px;background:#e3e6ee"></div><div class="a" style="left:861px;top:0;width:159px;height:32px;line-height:32px;padding-left:10px;white-space:nowrap;overflow:hidden">B63E4D221A83</div><div class="a" style="left:1020px;top:0;width:1px;height:33px;background:#e3e6ee"></div><div class="a" style="left:1021px;top:0;width:159px;height:32px;line-height:32px;padding-left:10px;white-space:nowrap;overflow:hidden">ptsoi 030 038200013...</div><div class="a" style="left:1180px;top:0;width:1px;height:33px;background:#e3e6ee"></div><div class="a" style="left:1340px;top:0;width:1px;height:33px;background:#e3e6ee"></div><div class="a" style="left:1341px;top:0;width:159px;height:32px;line-height:32px;padding-left:10px;white-space:nowrap;overflow:hidden">038200013802</div><div class="a" style="left:1500px;top:0;width:1px;height:33px;background:#e3e6ee"></div><div class="a" style="left:1501px;top:0;width:159px;height:32px;line-height:32px;padding-left:10px;white-space:nowrap;overflow:hidden">HKD ptsoi 038200013802</div></div><div class="a" style="left:0;top:397px;width:1700px;height:33px;background:#fff;border-bottom:1px solid #e3e6ee"><div class="a" style="left:50px;top:0;width:1px;height:33px;background:#e3e6ee"></div><div class="a" style="left:200px;top:0;width:1px;height:33px;background:#e3e6ee"></div><div class="a" style="left:380px;top:0;width:1px;height:33px;background:#e3e6ee"></div><div class="a" style="left:540px;top:0;width:1px;height:33px;background:#e3e6ee"></div><div class="a" style="left:740px;top:0;width:1px;height:33px;background:#e3e6ee"></div><div class="a" style="left:860px;top:0;width:1px;height:33px;background:#e3e6ee"></div><div class="a" style="left:1020px;top:0;width:1px;height:33px;background:#e3e6ee"></div><div class="a" style="left:1180px;top:0;width:1px;height:33px;background:#e3e6ee"></div><div class="a" style="left:1340px;top:0;width:1px;height:33px;background:#e3e6ee"></div><div class="a" style="left:1500px;top:0;width:1px;height:33px;background:#e3e6ee"></div></div></div><div class="a" style="left:1865px;top:273px;width:8px;height:404px;background:#f1f1f1"></div><div class="a" style="left:1865px;top:273px;width:8px;height:164px;background:#575757;border-radius:4px"></div><div class="a" style="left:263px;top:677px;width:1610px;height:1px;background:#d2d2d2"></div><div class="a" style="left:264px;top:678px;width:1609px;height:32px;background:#fff;overflow:hidden"><div class="a" style="left:48px;top:0;width:1px;height:32px;background:#dcdcdc"></div><div class="a" style="left:198px;top:0;width:1px;height:32px;background:#dcdcdc"></div><div class="a" style="left:378px;top:0;width:1px;height:32px;background:#dcdcdc"></div><div class="a" style="left:538px;top:0;width:1px;height:32px;background:#dcdcdc"></div><div class="a" style="left:738px;top:0;width:1px;height:32px;background:#dcdcdc"></div><div class="a" style="left:858px;top:0;width:1px;height:32px;background:#dcdcdc"></div><div class="a" style="left:1018px;top:0;width:1px;height:32px;background:#dcdcdc"></div><div class="a" style="left:1178px;top:0;width:1px;height:32px;background:#dcdcdc"></div><div class="a" style="left:1338px;top:0;width:1px;height:32px;background:#dcdcdc"></div><div class="a" style="left:1498px;top:0;width:1px;height:32px;background:#dcdcdc"></div></div><div class="a" style="left:263px;top:710px;width:1610px;height:8px;background:#f1f1f1"></div><div class="a" style="left:263px;top:710px;width:469px;height:8px;background:#575757;border-radius:4px"></div><div class="a" style="left:263px;top:718px;width:1610px;height:33px;background:#fff;border:1px solid #dcdcdc;border-top:none"></div><svg class="a" style="left:266px;top:724px" width="22" height="20" viewBox="0 0 22 20"><path d="M10.2 2 L2.6 10 L10.2 18 M17.4 2 L9.8 10 L17.4 18" fill="none" stroke="#c4c4c4" stroke-width="1.1"/></svg><svg class="a" style="left:300px;top:724px" width="16" height="20" viewBox="0 0 16 20"><path d="M11.8 2 L4 10 L11.8 18" fill="none" stroke="#c4c4c4" stroke-width="1.1"/></svg><div class="a" style="left:328px;top:719px;width:1px;height:31px;background:#e2e2e2"></div><div class="a" style="left:488px;top:719px;width:1px;height:31px;background:#e2e2e2"></div><div class="a" style="left:561px;top:719px;width:1px;height:31px;background:#e2e2e2"></div><div class="a lbl" style="left:341px;top:726px">Trang</div><div class="a" style="left:389px;top:719px;width:40px;height:30px;border:1px solid #d6d6d6;background:#fff;line-height:28px;padding-left:7px">1</div><div class="a lbl" style="left:435px;top:726px">trên 13</div><svg class="a" style="left:501px;top:724px" width="16" height="20" viewBox="0 0 16 20"><path d="M4 2 L11.5 9.8 L4 17.6" fill="none" stroke="#6e6e6e" stroke-width="1.05"/></svg><svg class="a" style="left:530px;top:724px" width="22" height="20" viewBox="0 0 22 20"><path d="M3.5 2 L11 9.8 L3.5 17.6 M10.3 2 L17.8 9.8 L10.3 17.6" fill="none" stroke="#6e6e6e" stroke-width="1.05"/></svg><svg class="a" style="left:572px;top:725px" width="20" height="20" viewBox="0 0 20 20"><path d="M17.6 11.6 A7.8 7.8 0 1 1 16.4 4.6" fill="none" stroke="#6e6e6e" stroke-width="1.05"/><path d="M11.3 8.4 H17.7 V2.2" fill="none" stroke="#6e6e6e" stroke-width="1.05"/></svg><div class="a lbl" style="left:1738px;top:726px">Tổng số: 364 bản ghi</div><div class="a" style="left:641px;top:177px;width:363px;height:496px;border:3px solid #e8413c"></div><div class="a" style="left:1877px;top:179px;width:35px;height:573px;background:#f2f2f2"></div><svg class="a" style="left:1884px;top:189px" width="18" height="18" viewBox="0 0 18 18"><circle cx="9" cy="9" r="7.6" fill="none" stroke="#3b8fd8" stroke-width="1.1"/><path d="M10.5 5 L6.5 9 L10.5 13" fill="none" stroke="#3b8fd8" stroke-width="1.1"/></svg><div class="a" style="left:1849px;top:250px;width:92px;height:14px;line-height:14px;color:#3b8fd8;white-space:nowrap;transform:rotate(90deg);transform-origin:center">Nhật ký trao đổi</div></body></html>
